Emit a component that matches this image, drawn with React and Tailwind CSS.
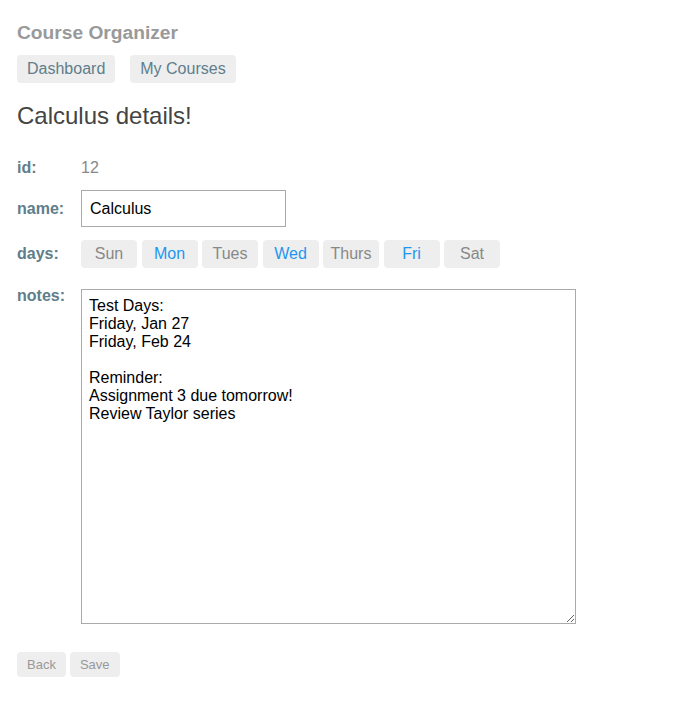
const days = [
  { name: 'Sun', on: false },
  { name: 'Mon', on: true },
  { name: 'Tues', on: false },
  { name: 'Wed', on: true },
  { name: 'Thurs', on: false },
  { name: 'Fri', on: true },
  { name: 'Sat', on: false },
]

const notes = `Test Days:
Friday, Jan 27
Friday, Feb 24

Reminder:
Assignment 3 due tomorrow!
Review Taylor series`

export default function App() {
  return (
    <div className="min-h-[717px] bg-white px-[17px] pb-[40px] font-['Liberation_Sans',Arial,sans-serif]">
      <h1 className="pt-[22px] text-[19.2px] leading-[22px] font-bold text-[#999]">Course Organizer</h1>

      <nav className="mt-[11px] flex gap-[15px]">
        <a href="#" className="h-[28px] rounded-[4px] bg-[#eee] px-[10px] text-[16px] leading-[28px] text-[#607d8b]">
          Dashboard
        </a>
        <a href="#" className="h-[28px] rounded-[4px] bg-[#eee] px-[10px] text-[16px] leading-[28px] text-[#607d8b]">
          My Courses
        </a>
      </nav>

      <h2 className="mt-[19px] text-[24px] leading-[28px] text-[#444]">Calculus details!</h2>

      <div className="mt-[27px] flex h-[22px] items-center text-[16px]">
        <label className="w-[64px] font-bold text-[#607d8b]">id:</label>
        <span className="text-[#888]">12</span>
      </div>

      <div className="mt-[11px] flex h-[37px] items-center text-[16px]">
        <label className="w-[64px] font-bold text-[#607d8b]">name:</label>
        <input
          defaultValue="Calculus"
          className="h-[37px] w-[205px] border border-[#aaa] px-[8px] text-[16px] text-black outline-none"
        />
      </div>

      <div className="mt-[13px] flex h-[28px] items-center text-[16px]">
        <label className="w-[64px] font-bold text-[#607d8b]">days:</label>
        <div className="flex gap-[4.5px]">
          {days.map((d) => (
            <button
              key={d.name}
              className={
                'h-[28px] w-[56px] rounded-[4px] bg-[#eee] text-center text-[16px] ' +
                (d.on ? 'text-[#1e96f0]' : 'text-[#888]')
              }
            >
              {d.name}
            </button>
          ))}
        </div>
      </div>

      <div className="mt-[21px] flex items-start text-[16px]">
        <label className="-mt-[2px] w-[64px] leading-[18px] font-bold text-[#607d8b]">notes:</label>
        <textarea
          defaultValue={notes}
          className="h-[335px] w-[495px] border border-[#aaa] px-[7px] pt-[7px] text-[16px] leading-[18px] text-black outline-none"
        />
      </div>

      <div className="mt-[28px] flex gap-[4px]">
        <button className="h-[25px] rounded-[4px] bg-[#eee] px-[10px] text-[13px] text-[#999]">Back</button>
        <button className="h-[25px] rounded-[4px] bg-[#eee] px-[10px] text-[13px] text-[#999]">Save</button>
      </div>
    </div>
  )
}
